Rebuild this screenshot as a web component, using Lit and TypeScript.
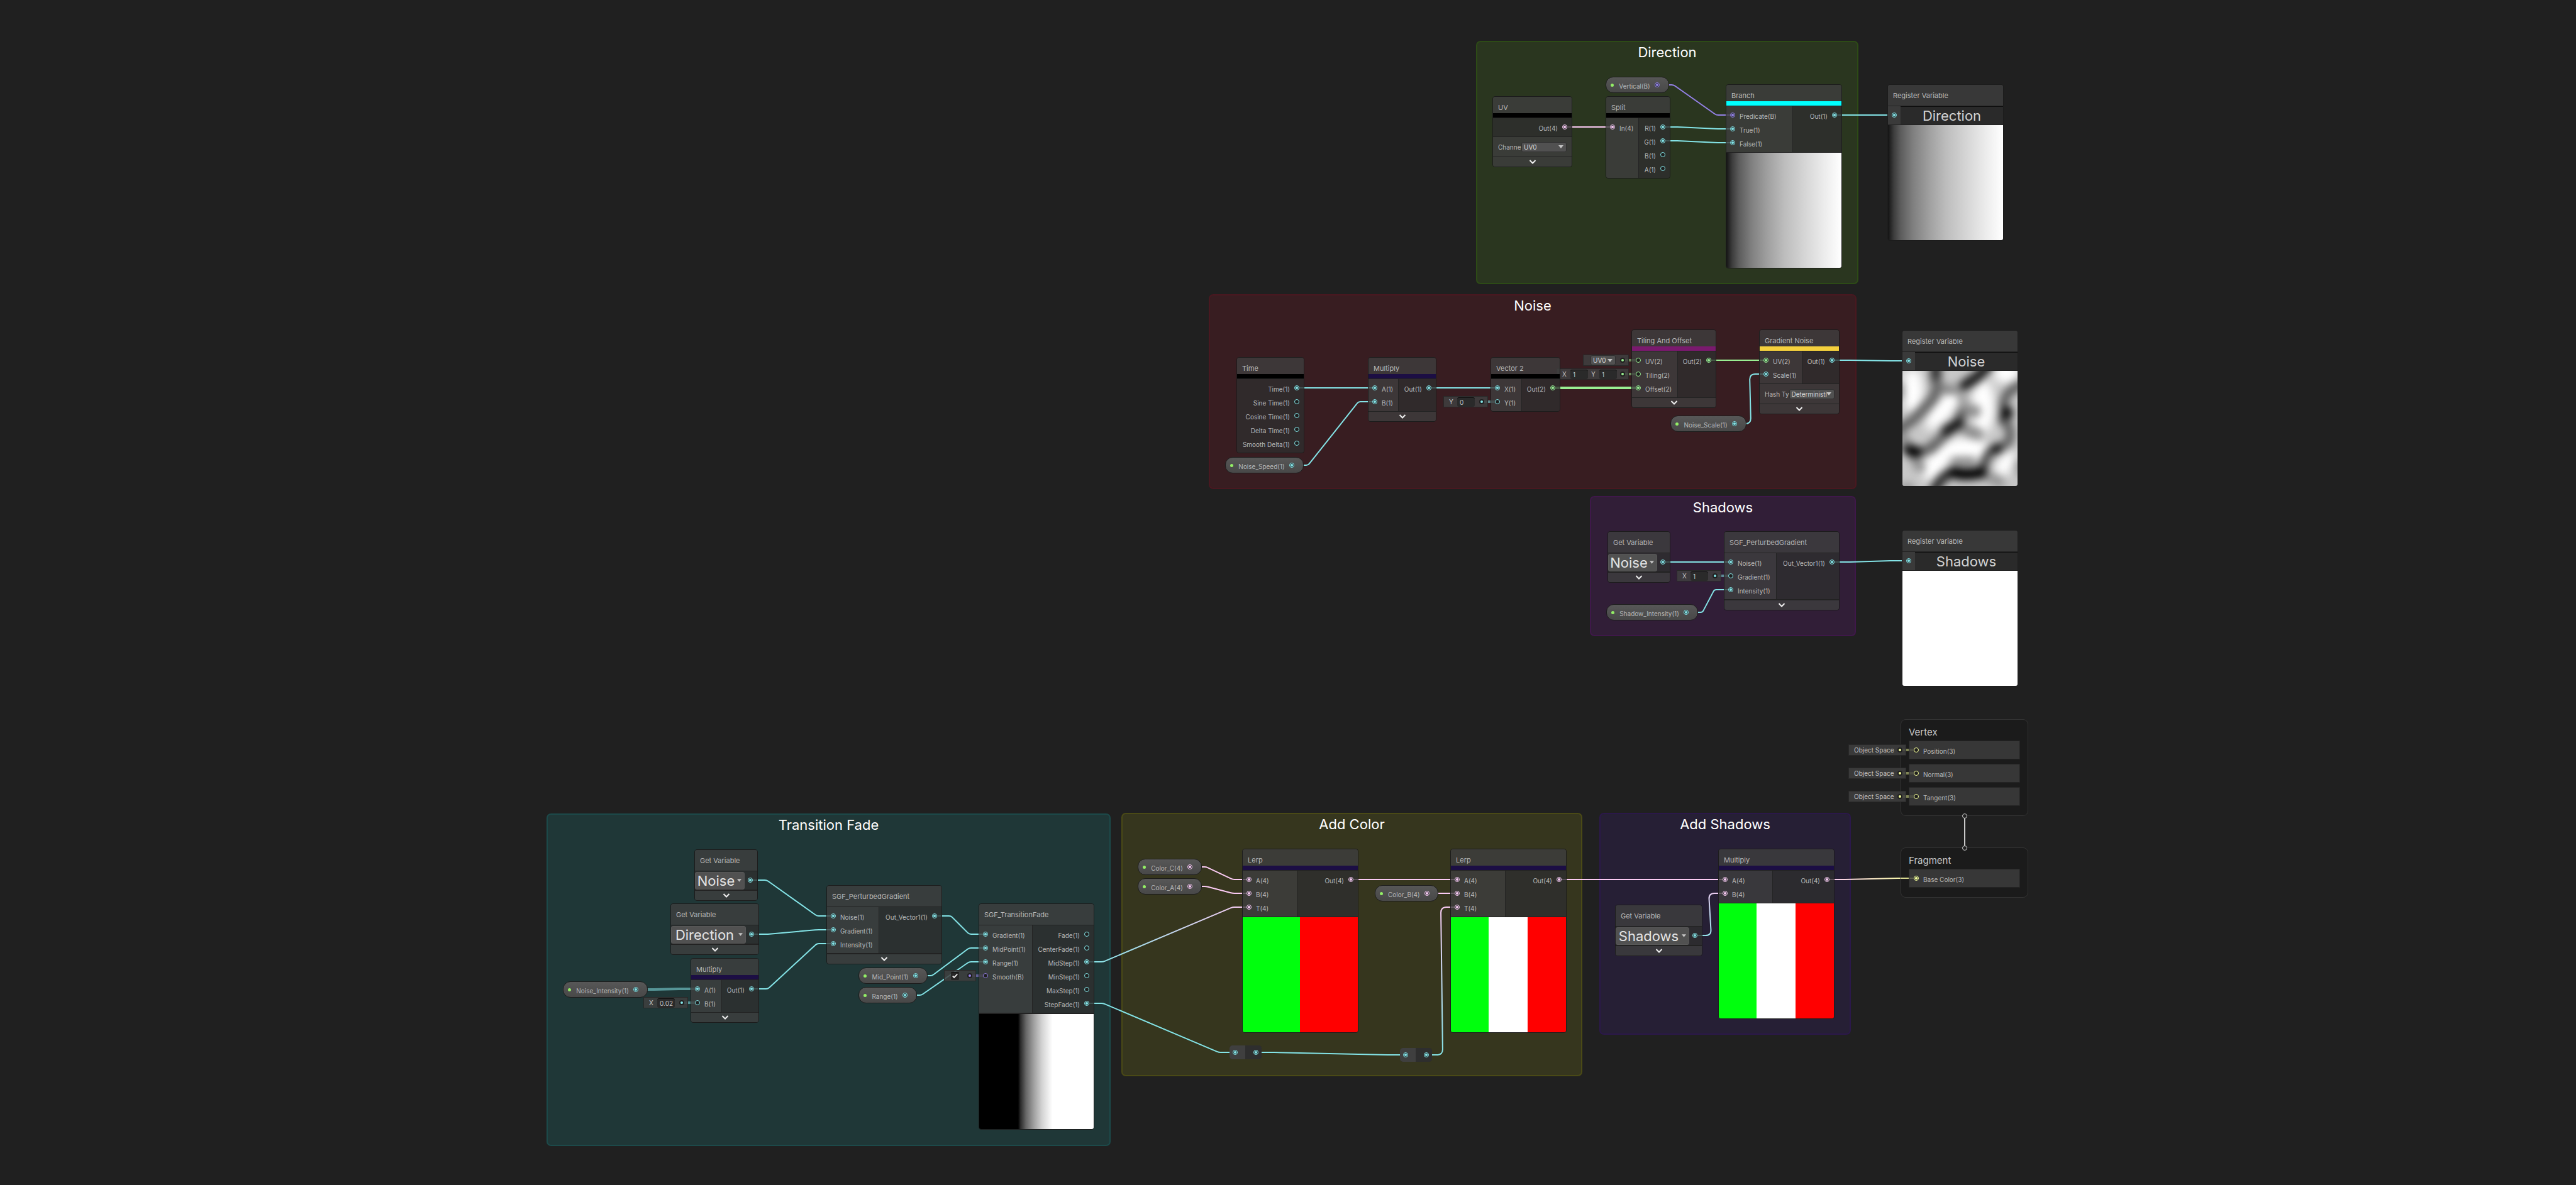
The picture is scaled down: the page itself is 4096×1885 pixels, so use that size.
import { LitElement, html, css, svg, nothing } from "lit";
import { customElement } from "lit/decorators.js";
import { styleMap } from "lit/directives/style-map.js";

/** Zoom of the graph view: graph units are multiplied by this. */
const ZOOM = 0.915;
const px = (n: number) => Math.round(n * ZOOM);

const TYPE_COLORS: Record<string, string> = {
  "1": "#84e4e7",
  "2": "#9aef92",
  "3": "#f6ff9a",
  "4": "#fbcbf4",
  B: "#9481e6",
};

interface Group { title: string; x: number; y: number; w: number; h: number; tone: string; }
interface NodeSpec {
  id: string; x: number; y: number; w: number; title: string;
  stripe?: string;
  /** Width of the input column. */
  inW?: number;
  /** Port names; a trailing * marks a connected port. */
  ins?: string[]; outs?: string[];
  control?: { label: string; value: string };
  collapse?: boolean; thick?: boolean;
  preview?: string;
  variable?: string; register?: string;
}
interface Pill { id: string; x: number; y: number; w: number; name: string; }
interface Slot { node: string; port: number; kind: "fields" | "uv" | "check"; w: number; fields?: [string, string][]; type: string; }
interface Wire { from: string; to: string; type: string; toType?: string; thick?: boolean; dim?: boolean; }

const GROUPS: Group[] = [
  { title: "Direction", x: 2565, y: 71, w: 664, h: 423, tone: "green" },
  { title: "Noise", x: 2101, y: 511, w: 1125, h: 339, tone: "red" },
  { title: "Shadows", x: 2763, y: 862, w: 462, h: 244, tone: "violet" },
  { title: "Transition Fade", x: 950, y: 1414, w: 980, h: 578, tone: "teal" },
  { title: "Add Color", x: 1949, y: 1413, w: 801, h: 458, tone: "olive" },
  { title: "Add Shadows", x: 2779, y: 1413, w: 437, h: 386, tone: "indigo" },
];

const NODES: NodeSpec[] = [
  { id: "uv", x: 2593, y: 167, w: 139, title: "UV", stripe: "#000", outs: ["Out(4)*"], control: { label: "Channe", value: "UV0" }, collapse: true },
  { id: "split", x: 2790, y: 167, w: 113, title: "Split", stripe: "#000", inW: 57, ins: ["In(4)*"], outs: ["R(1)*", "G(1)*", "B(1)", "A(1)"] },
  { id: "branch", x: 2999, y: 146, w: 202, title: "Branch", stripe: "#00ffff", inW: 116, ins: ["Predicate(B)*", "True(1)*", "False(1)*"], outs: ["Out(1)*"], preview: "ramp" },
  { id: "regDir", x: 3280, y: 146, w: 202, title: "Register Variable", register: "Direction", preview: "ramp" },

  { id: "time", x: 2149, y: 621, w: 118, title: "Time", stripe: "#000", outs: ["Time(1)*", "Sine Time(1)", "Cosine Time(1)", "Delta Time(1)", "Smooth Delta(1)"] },
  { id: "mulNoise", x: 2377, y: 621, w: 119, title: "Multiply", stripe: "#1c0e44", inW: 53, ins: ["A(1)*", "B(1)*"], outs: ["Out(1)*"], collapse: true },
  { id: "vec2", x: 2590, y: 621, w: 122, title: "Vector 2", stripe: "#000", inW: 54, ins: ["X(1)*", "Y(1)"], outs: ["Out(2)*"] },
  { id: "tiling", x: 2835, y: 573, w: 147, title: "Tiling And Offset", stripe: "#7a1a6e", inW: 80, ins: ["UV(2)", "Tiling(2)", "Offset(2)*"], outs: ["Out(2)*"], collapse: true },
  { id: "gnoise", x: 3057, y: 573, w: 140, title: "Gradient Noise", stripe: "#f5d03d", inW: 74, ins: ["UV(2)*", "Scale(1)*"], outs: ["Out(1)*"], control: { label: "Hash Ty", value: "Deterministic" }, collapse: true },
  { id: "regNoise", x: 3305, y: 574, w: 202, title: "Register Variable", register: "Noise", preview: "noise" },

  { id: "getNoise1", x: 2793, y: 924, w: 110, title: "Get Variable", variable: "Noise", collapse: true },
  { id: "pert1", x: 2996, y: 924, w: 201, title: "SGF_PerturbedGradient", inW: 91, ins: ["Noise(1)*", "Gradient(1)", "Intensity(1)*"], outs: ["Out_Vector1(1)*"], thick: true, collapse: true },
  { id: "regShadows", x: 3305, y: 921, w: 202, title: "Register Variable", register: "Shadows", preview: "white" },

  { id: "getNoise2", x: 1207, y: 1476, w: 110, title: "Get Variable", variable: "Noise", collapse: true },
  { id: "getDir", x: 1165, y: 1571, w: 154, title: "Get Variable", variable: "Direction", collapse: true },
  { id: "mulInt", x: 1200, y: 1666, w: 119, title: "Multiply", stripe: "#1c0e44", inW: 54, ins: ["A(1)*", "B(1)"], outs: ["Out(1)*"], collapse: true },
  { id: "pert2", x: 1436, y: 1539, w: 201, title: "SGF_PerturbedGradient", inW: 91, ins: ["Noise(1)*", "Gradient(1)*", "Intensity(1)*"], outs: ["Out_Vector1(1)*"], thick: true, collapse: true },
  { id: "fade", x: 1700, y: 1571, w: 202, title: "SGF_TransitionFade", inW: 93, ins: ["Gradient(1)*", "MidPoint(1)*", "Range(1)*", "Smooth(B)"], outs: ["Fade(1)", "CenterFade(1)", "MidStep(1)*", "MinStep(1)", "MaxStep(1)", "StepFade(1)*"], thick: true, preview: "step" },

  { id: "lerp1", x: 2159, y: 1475, w: 202, title: "Lerp", stripe: "#1c0e44", inW: 95, ins: ["A(4)*", "B(4)*", "T(4)*"], outs: ["Out(4)*"], preview: "duo" },
  { id: "lerp2", x: 2520, y: 1475, w: 202, title: "Lerp", stripe: "#1c0e44", inW: 95, ins: ["A(4)*", "B(4)*", "T(4)*"], outs: ["Out(4)*"], preview: "trio" },

  { id: "mulShadow", x: 2986, y: 1475, w: 202, title: "Multiply", stripe: "#1c0e44", inW: 94, ins: ["A(4)*", "B(4)*"], outs: ["Out(4)*"], preview: "trio" },
  { id: "getShadows", x: 2807, y: 1573, w: 151, title: "Get Variable", variable: "Shadows", collapse: true },
];

const PILLS: Pill[] = [
  { id: "pVertical", x: 2790, y: 133, w: 111, name: "Vertical(B)" },
  { id: "pSpeed", x: 2129, y: 794, w: 137, name: "Noise_Speed(1)" },
  { id: "pScale", x: 2903, y: 722, w: 132, name: "Noise_Scale(1)" },
  { id: "pShadow", x: 2791, y: 1050, w: 160, name: "Shadow_Intensity(1)" },
  { id: "pIntensity", x: 978, y: 1706, w: 148, name: "Noise_Intensity(1)" },
  { id: "pMid", x: 1492, y: 1682, w: 120, name: "Mid_Point(1)" },
  { id: "pRange", x: 1492, y: 1716, w: 101, name: "Range(1)" },
  { id: "pColorC", x: 1977, y: 1493, w: 111, name: "Color_C(4)" },
  { id: "pColorA", x: 1977, y: 1527, w: 111, name: "Color_A(4)" },
  { id: "pColorB", x: 2389, y: 1539, w: 110, name: "Color_B(4)" },
];

const REROUTES = [
  { id: "r1", x: 2137, y: 1818 },
  { id: "r2", x: 2433, y: 1822 },
];

const SLOTS: Slot[] = [
  { node: "vec2", port: 1, kind: "fields", w: 78, fields: [["Y", "0"]], type: "1" },
  { node: "tiling", port: 0, kind: "uv", w: 80, type: "2" },
  { node: "tiling", port: 1, kind: "fields", w: 126, fields: [["X", "1"], ["Y", "1"]], type: "2" },
  { node: "pert1", port: 1, kind: "fields", w: 78, fields: [["X", "1"]], type: "1" },
  { node: "mulInt", port: 1, kind: "fields", w: 78, fields: [["X", "0.02"]], type: "1" },
  { node: "fade", port: 3, kind: "check", w: 56, type: "B" },
];

const BLOCKS = [
  { id: "vertex", title: "Vertex", x: 3303, y: 1250, rows: ["Position(3)", "Normal(3)", "Tangent(3)"] },
  { id: "fragment", title: "Fragment", x: 3303, y: 1473, rows: ["Base Color(3)*"] },
];
const BLOCK_W = 222;

const WIRES: Wire[] = [
  { from: "uv:0", to: "split:0", type: "4" },
  { from: "pVertical", to: "branch:0", type: "B" },
  { from: "split:0", to: "branch:1", type: "1" },
  { from: "split:1", to: "branch:2", type: "1" },
  { from: "branch:0", to: "regDir:0", type: "1" },
  { from: "time:0", to: "mulNoise:0", type: "1" },
  { from: "pSpeed", to: "mulNoise:1", type: "1" },
  { from: "mulNoise:0", to: "vec2:0", type: "1" },
  { from: "vec2:0", to: "tiling:2", type: "2", thick: true },
  { from: "tiling:0", to: "gnoise:0", type: "2" },
  { from: "pScale", to: "gnoise:1", type: "1" },
  { from: "gnoise:0", to: "regNoise:0", type: "1" },
  { from: "getNoise1:0", to: "pert1:0", type: "1" },
  { from: "pShadow", to: "pert1:2", type: "1" },
  { from: "pert1:0", to: "regShadows:0", type: "1" },
  { from: "getNoise2:0", to: "pert2:0", type: "1" },
  { from: "getDir:0", to: "pert2:1", type: "1" },
  { from: "pIntensity", to: "mulInt:0", type: "1", thick: true, dim: true },
  { from: "mulInt:0", to: "pert2:2", type: "1" },
  { from: "pert2:0", to: "fade:0", type: "1" },
  { from: "pMid", to: "fade:1", type: "1" },
  { from: "pRange", to: "fade:2", type: "1" },
  { from: "fade:2", to: "lerp1:2", type: "1", toType: "4" },
  { from: "fade:5", to: "r1", type: "1" },
  { from: "r1", to: "r2", type: "1" },
  { from: "r2", to: "lerp2:2", type: "1", toType: "4" },
  { from: "pColorC", to: "lerp1:0", type: "4" },
  { from: "pColorA", to: "lerp1:1", type: "4" },
  { from: "lerp1:0", to: "lerp2:0", type: "4" },
  { from: "pColorB", to: "lerp2:1", type: "4" },
  { from: "lerp2:0", to: "mulShadow:0", type: "4" },
  { from: "getShadows:0", to: "mulShadow:1", type: "1", toType: "4" },
  { from: "mulShadow:0", to: "fragment:0", type: "4", toType: "3" },
];

const typeOf = (name: string) => name.match(/\((.)\)/)![1];
const labelOf = (name: string) => name.replace("*", "");

/** Screen position of the centre of a port, on its output or input side. */
function anchor(ref: string, side: "out" | "in"): [number, number] {
  const [id, index = "0"] = ref.split(":");
  const i = Number(index);
  const node = NODES.find((n) => n.id === id);
  if (node) {
    const y = px(node.y) + 49 + 22 * i;
    return side === "out" ? [px(node.x + node.w) - 12, y] : [px(node.x) + 11, y];
  }
  const pill = PILLS.find((p) => p.id === id);
  if (pill) return [px(pill.x + pill.w) - 19, px(pill.y) + 13];
  const block = BLOCKS.find((b) => b.id === id);
  if (block) return [px(block.x) + 25, px(block.y) + 49 + 37 * i];
  const r = REROUTES.find((q) => q.id === id)!;
  return [px(r.x) + (side === "out" ? 42 : 9), px(r.y) + 11];
}

/** Horizontal stub, straight run, horizontal stub, with the two bends rounded. */
function wirePath([x1, y1]: [number, number], [x2, y2]: [number, number]): string {
  if (y1 === y2) return `M${x1} ${y1}H${x2}`;
  const ax = x1 + 26;
  const bx = x2 - 26;
  const dx = bx - ax;
  const dy = y2 - y1;
  const len = Math.hypot(dx, dy);
  const r = Math.min(Math.abs(dx) < 12 ? 9 : 3, len / 2);
  const ux = (dx / len) * r;
  const uy = (dy / len) * r;
  return `M${x1} ${y1}L${ax - r} ${y1}Q${ax} ${y1} ${ax + ux} ${y1 + uy}L${bx - ux} ${y2 - uy}Q${bx} ${y2} ${bx + r} ${y2}L${x2} ${y2}`;
}

@customElement("app-root")
export class AppRoot extends LitElement {
  static styles = css`
    :host {
      display: block;
      position: relative;
      box-sizing: border-box;
      width: 100%;
      min-height: 100vh;
      overflow: hidden;
      background: #202020;
      color: #b9b9b9;
      font-family: Inter, "Liberation Sans", sans-serif;
      font-size: 10px;
      line-height: 14px;
    }
    *, *::before { box-sizing: border-box; }
    h1, h2, h3 { margin: 0; font-weight: 400; }
    button, input, select { font: inherit; color: inherit; margin: 0; padding: 0; border: 0; min-width: 0; }

    .group, .node, .pill, .reroute, .slot, .block, .wires { position: absolute; }
    .wires { inset: 0; width: 100%; height: 100%; fill: none; }

    .group { border: 2px solid; border-radius: 7px; padding-top: 3px; text-align: center; }
    .group h1 { font-size: 22px; line-height: 26px; color: #fff; }
    .green { background: #2a361f; border-color: #2d4b16; }
    .red { background: #381d21; border-color: #491820; }
    .violet { background: #311e37; border-color: #3f184a; }
    .teal { background: #1f3737; border-color: #1c4a4a; }
    .olive { background: #36361e; border-color: #4a4a16; }
    .indigo { background: #261f35; border-color: #2b184a; }

    .node { border: 1px solid #1c1c1c; border-radius: 4px; overflow: hidden; display: flex; flex-direction: column; }
    .head { height: 33px; padding: 10px 0 0 8px; background: rgba(63, 63, 63, 0.8); white-space: nowrap; }
    .striped { height: 26px; }
    .stripe { height: 7px; }
    .head h2 { font-size: 11px; line-height: 15px; }
    .rule { height: 1px; background: #222; }
    .rule.thick { height: 2px; }
    .body { display: grid; }
    .ins { padding: 3px 0 4px 6px; background: rgba(63, 63, 63, 0.8); }
    .outs { padding: 3px 7px 4px 0; background: rgba(46, 46, 46, 0.8); }
    .ins + .outs { border-left: 1px solid #242424; }
    .port { display: flex; align-items: center; gap: 7px; height: 22px; white-space: nowrap; }
    .outs .port { justify-content: flex-end; }
    .port span, .pill span, .row span { padding-top: 4px; }
    .dot { display: block; flex: none; width: 8px; height: 8px; fill: none; }

    .control { display: flex; align-items: center; justify-content: space-between; height: 31px; padding: 0 8px; background: rgba(63, 63, 63, 0.8); }
    .control label { white-space: nowrap; }
    .control .pick { flex: none; width: 72px; }
    .pick { display: grid; align-items: center; min-width: 0; }
    .pick > * { grid-area: 1 / 1; min-width: 0; }
    .pick svg { justify-self: end; margin-right: 5px; pointer-events: none; fill: #c4c4c4; }
    .pick select {
      appearance: none; width: 100%; height: 16px; padding: 0 11px 0 3px; border: 1px solid #303030;
      border-radius: 3px; background: #515151; color: #dcdcdc; line-height: 14px; outline: none;
    }
    .collapse {
      display: grid; place-items: center; width: 100%; height: 15px;
      background: rgba(63, 63, 63, 0.8);
    }
    .collapse svg { fill: none; stroke: #eee; stroke-width: 2; }

    .var { grid-template-columns: 1fr 20px; height: 29px; background: rgba(46, 46, 46, 0.8); }
    .var .pick select {
      height: 28px; padding: 0 12px 0 0; border-color: #585858; text-align: center; text-align-last: center;
      font-size: 22px; line-height: 26px; color: #e4e4e4;
    }
    .var .pick svg { width: 7px; }
    .var .outs { padding-left: 0; background: none; }
    .reg { grid-template-columns: 20px 1fr; height: 29px; background: #2a2a2a; }
    .reg input { width: 100%; border-top: 1px solid #0d0d0d; background: #2a2a2a; text-align: center; font-size: 22px; color: #d2d2d2; outline: none; }

    .preview { height: 183px; width: 100%; display: block; }
    .ramp { background: linear-gradient(90deg, #141414 0%, #3c3c3c 5%, #5c5c5c 11%, #808080 22%, #a0a0a0 36%, #bcbcbc 50%, #d8d8d8 70%, #ececec 85%, #ffffff 100%); }
    .white { background: #fff; }
    .step { background: linear-gradient(90deg, #000 34%, #2a2a2a 36%, #686868 41%, #a2a2a2 48%, #d4d4d4 55%, #fff 64%); }
    .duo { background: linear-gradient(90deg, #00ff0d 50%, #ff0000 50%); }
    .trio { background: linear-gradient(90deg, #00ff0d 33%, #fff 33%, #fff 66.5%, #ff0000 66.5%); }

    .pill {
      display: flex; align-items: center; gap: 7px; height: 26px; padding: 0 14px 0 6px;
      border: 1px solid #1c1c1c; border-radius: 12px; white-space: nowrap;
      background: linear-gradient(#575757, #484848);
    }
    .pill i { flex: none; width: 5px; height: 5px; margin: 0 1px; border-radius: 50%; background: #93ee66; }
    .pill span { flex: 1; text-align: center; }

    .reroute { display: grid; grid-template-columns: 25px 26px; height: 22px; border-radius: 5px; overflow: hidden; background: #2e2e2e; align-items: center; }
    .reroute div { display: grid; align-items: center; height: 100%; padding-left: 5px; background: #3f3f3f; }
    .reroute div + div { padding-left: 13px; background: #2e2e2e; }

    .slot {
      display: flex; align-items: center; height: 18px; padding: 0 5px 0 8px;
      border: 1px solid #282828; background: rgba(63, 63, 63, 0.85); color: #c4c4c4; white-space: nowrap;
    }
    .slot .dot { margin-left: auto; }
    .slot label { width: 13px; }
    .slot input[type="text"] { width: 28px; height: 15px; margin-right: 5px; padding-left: 4px; border-top: 1px solid #0d0d0d; border-radius: 3px; background: #2a2a2a; outline: none; }
    .slot .pick { width: 40px; margin-left: 3px; }
    .slot input[type="checkbox"] { appearance: none; width: 13px; height: 13px; border-radius: 2px; background: #262626; border-top: 1px solid #0d0d0d; }
    .tick { display: grid; margin-left: 2px; }
    .tick > * { grid-area: 1 / 1; }
    .tick svg { fill: none; stroke: #eee; stroke-width: 2; pointer-events: none; }

    .block { padding: 12px 12px 15px; border: 1px solid #333; border-radius: 8px; background: rgba(0, 0, 0, 0.13); }
    .block h3 { height: 21px; font-size: 15px; line-height: 15px; color: #c8c8c8; }
    .rows { display: grid; gap: 7px; }
    .row { display: flex; align-items: center; gap: 7px; height: 30px; padding-left: 7px; border: 1px solid #242424; background: rgba(63, 63, 63, 0.8); }
  `;

  private dot(type: string, on: boolean) {
    const c = TYPE_COLORS[type];
    return html`<svg class="dot" viewBox="0 0 8 8" aria-hidden="true">
      <circle cx="4" cy="4" r="3.5" stroke=${c} fill=${on ? "#2a3334" : "#1e1e1e"}></circle>
      ${on ? svg`<circle cx="4" cy="4" r="2.1" fill=${c}></circle>` : nothing}
    </svg>`;
  }

  private port(name: string, out: boolean) {
    const dot = this.dot(typeOf(name), name.endsWith("*"));
    const label = html`<span>${labelOf(name)}</span>`;
    return html`<div class="port">${out ? html`${label}${dot}` : html`${dot}${label}`}</div>`;
  }

  private pick(id: string, value: string, label?: string) {
    return html`<div class="pick">
      <select id=${id} aria-label=${label ?? nothing}><option>${value}</option></select>
      <svg width="8" height="5" viewBox="0 0 8 5" aria-hidden="true"><path d="M0 0H8L4 5Z"></path></svg>
    </div>`;
  }

  private body(n: NodeSpec) {
    if (n.variable) {
      return html`<div class="body var">
        ${this.pick(`${n.id}-name`, n.variable, "Variable")}
        <div class="outs"><div class="port">${this.dot("1", true)}</div></div>
      </div>`;
    }
    if (n.register) {
      return html`<div class="body reg">
        <div class="ins"><div class="port">${this.dot("1", true)}</div></div>
        <input type="text" aria-label="Variable name" .value=${n.register} />
      </div>`;
    }
    const columns = n.ins ? `${px(n.inW!) - 1}px 1fr` : "1fr";
    return html`<div class="body" style=${styleMap({ gridTemplateColumns: columns })}>
      ${n.ins ? html`<div class="ins">${n.ins.map((p) => this.port(p, false))}</div>` : nothing}
      <div class="outs">${n.outs!.map((p) => this.port(p, true))}</div>
    </div>`;
  }

  private preview(kind: string) {
    if (kind !== "noise") return html`<div class="preview ${kind}"></div>`;
    return html`<svg class="preview" viewBox="0 0 200 200" preserveAspectRatio="none" role="img" aria-label="Noise preview">
      <defs>
        <filter id="soft" x="-20%" y="-20%" width="140%" height="140%" color-interpolation-filters="sRGB"><feGaussianBlur stdDeviation="7"></feGaussianBlur></filter>
        <filter id="softer" x="-20%" y="-20%" width="140%" height="140%" color-interpolation-filters="sRGB"><feGaussianBlur stdDeviation="9"></feGaussianBlur></filter>
      </defs>
      <rect width="200" height="200" fill="#c8c8c8"></rect>
      <g filter="url(#softer)" fill="#fff">
        <ellipse cx="18" cy="34" rx="18" ry="38"></ellipse>
        <ellipse cx="70" cy="68" rx="17" ry="42" transform="rotate(40 70 68)"></ellipse>
        <ellipse cx="140" cy="62" rx="20" ry="46"></ellipse>
        <ellipse cx="180" cy="2" rx="22" ry="20"></ellipse>
        <ellipse cx="108" cy="138" rx="44" ry="22"></ellipse>
        <ellipse cx="58" cy="162" rx="18" ry="32" transform="rotate(35 58 162)"></ellipse>
        <ellipse cx="178" cy="162" rx="14" ry="26" transform="rotate(30 178 162)"></ellipse>
      </g>
      <g filter="url(#soft)" fill="none" stroke-linecap="round" stroke-linejoin="round">
        <path stroke="#848484" stroke-width="16" d="M60 26Q80 36 98 30"></path>
        <path stroke="#a0a0a0" stroke-width="15" d="M98 32Q112 56 104 76"></path>
        <path stroke="#909090" stroke-width="22" d="M112 70H126"></path>
        <path stroke="#8a8a8a" stroke-width="17" d="M98 94L118 106L132 110"></path>
        <path stroke="#8e8e8e" stroke-width="17" d="M-8 132L14 138L30 168M-4 104L12 136"></path>
        <path stroke="#959595" stroke-width="18" d="M92 158H120M146 182L170 194M206 162V174M4 204H12M-6 28V42"></path>
        <path stroke="#2c2c2c" stroke-width="19" d="M58 -14V16"></path>
        <path stroke="#686868" stroke-width="18" d="M59 22Q60 30 56 42"></path>
        <path stroke="#161616" stroke-width="18" d="M108 25L118 18Q136 8 150 -12"></path>
        <path stroke="#606060" stroke-width="17" d="M56 44Q42 62 22 82Q10 94 -8 100"></path>
        <path stroke="#606060" stroke-width="17" d="M102 74L98 92L78 106Q62 122 50 134"></path>
        <path stroke="#101010" stroke-width="17" d="M98 90L76 104"></path>
        <path stroke="#606060" stroke-width="17" d="M52 130Q40 142 24 140"></path>
        <path stroke="#000" stroke-width="20" d="M13 138L24 141"></path>
        <path stroke="#5c5c5c" stroke-width="16" d="M210 22L186 36Q172 52 178 76"></path>
        <path stroke="#000" stroke-width="20" d="M182 72L178 86"></path>
        <path stroke="#606060" stroke-width="16" d="M180 88Q192 110 184 124L164 136"></path>
        <path stroke="#000" stroke-width="17" d="M164 135L153 141"></path>
        <path stroke="#484848" stroke-width="16" d="M152 142Q142 156 140 172"></path>
        <path stroke="#282828" stroke-width="17" d="M88 176Q68 182 54 210"></path>
        <path stroke="#000" stroke-width="20" d="M90 177Q110 183 136 177"></path>
      </g>
    </svg>`;
  }

  private node(n: NodeSpec) {
    const box = { left: `${px(n.x)}px`, top: `${px(n.y)}px`, width: `${px(n.x + n.w) - px(n.x)}px` };
    const thick = n.thick || n.variable ? "rule thick" : "rule";
    return html`<section class="node" style=${styleMap(box)}>
      <header class="head ${n.stripe ? "striped" : ""}"><h2>${n.title}</h2></header>
      ${n.stripe ? html`<div class="stripe" style=${styleMap({ background: n.stripe })}></div>` : nothing}
      <div class="rule"></div>
      ${this.body(n)}
      ${n.control
        ? html`<div class="rule"></div>
            <div class="control">
              <label for="${n.id}-control">${n.control.label}</label>
              ${this.pick(`${n.id}-control`, n.control.value)}
            </div>`
        : nothing}
      ${n.collapse
        ? html`<div class=${thick}></div>
            <button class="collapse" type="button" aria-label="Collapse ${n.title}">
              <svg width="12" height="7" viewBox="0 0 12 7" aria-hidden="true"><path d="M1.5 1L6 5.5L10.5 1"></path></svg>
            </button>`
        : nothing}
      ${n.preview ? html`<div class=${thick}></div>${this.preview(n.preview)}` : nothing}
    </section>`;
  }

  private slotDot(type: string) {
    return html`<svg class="dot" viewBox="0 0 8 8" aria-hidden="true">
      <circle cx="4" cy="4" r="4" fill="#1e1e1e"></circle>
      <circle cx="4" cy="4" r="2" fill=${TYPE_COLORS[type]}></circle>
    </svg>`;
  }

  private slotBox(s: Slot) {
    const [x, y] = anchor(`${s.node}:${s.port}`, "in");
    const w = px(s.w);
    const box = { left: `${x - 15 - w}px`, top: `${y - 9}px`, width: `${w}px` };
    const id = `${s.node}-${s.port}`;
    return html`<div class="slot" style=${styleMap(box)}>
      ${s.kind === "uv" ? this.pick(id, "UV0", "UV channel") : nothing}
      ${s.kind === "check"
        ? html`<div class="tick">
            <input type="checkbox" checked aria-label="Smooth" />
            <svg width="13" height="13" viewBox="0 0 14 14" aria-hidden="true"><path d="M3 7L5.5 9.5L11 4"></path></svg>
          </div>`
        : nothing}
      ${(s.fields ?? []).map(
        ([label, value]) => html`<label for="${id}-${label}">${label}</label><input id="${id}-${label}" type="text" .value=${value} />`,
      )}
      ${this.slotDot(s.type)}
    </div>`;
  }

  private wire(w: Wire, i: number) {
    const a = anchor(w.from, "out");
    const b = anchor(w.to, "in");
    const stroke = w.toType ? `url(#blend${i})` : TYPE_COLORS[w.type];
    return svg`
      ${w.toType
        ? svg`<linearGradient id="blend${i}" gradientUnits="userSpaceOnUse" x1=${a[0]} y1=${a[1]} x2=${b[0]} y2=${b[1]}>
            <stop offset="0" stop-color=${TYPE_COLORS[w.type]}></stop>
            <stop offset="1" stop-color=${TYPE_COLORS[w.toType]}></stop>
          </linearGradient>`
        : nothing}
      <path d=${wirePath(a, b)} stroke=${stroke} stroke-width=${w.thick ? 4 : 2} opacity=${w.dim ? 0.55 : 1}></path>`;
  }

  private stub([x, y]: [number, number], type: string) {
    return svg`<path d="M${x - 25} ${y}H${x}" stroke=${TYPE_COLORS[type]} stroke-width="4" opacity="0.55"></path>`;
  }

  render() {
    const vertex = BLOCKS[0];
    const linkX = px(vertex.x + BLOCK_W / 2);
    return html`
      ${GROUPS.map(
        (g) => html`<div class="group ${g.tone}" style=${styleMap({
          left: `${px(g.x)}px`, top: `${px(g.y)}px`,
          width: `${px(g.x + g.w) - px(g.x)}px`, height: `${px(g.y + g.h) - px(g.y)}px`,
        })}><h1>${g.title}</h1></div>`,
      )}
      <svg class="wires" aria-hidden="true">
        ${WIRES.map((w, i) => this.wire(w, i))}
        ${SLOTS.map((s) => this.stub(anchor(`${s.node}:${s.port}`, "in"), s.type))}
        ${vertex.rows.map((_, i) => this.stub(anchor(`vertex:${i}`, "in"), "3"))}
      </svg>
      ${SLOTS.map((s) => this.slotBox(s))}
      ${NODES.map((n) => this.node(n))}
      ${PILLS.map(
        (p) => html`<div class="pill" style=${styleMap({
          left: `${px(p.x)}px`, top: `${px(p.y)}px`, width: `${px(p.x + p.w) - px(p.x)}px`,
        })}><i></i><span>${p.name}</span>${this.dot(typeOf(p.name), true)}</div>`,
      )}
      ${REROUTES.map(
        (r) => html`<div class="reroute" style=${styleMap({ left: `${px(r.x)}px`, top: `${px(r.y)}px` })}>
          <div>${this.dot("1", true)}</div><div>${this.dot("1", true)}</div>
        </div>`,
      )}
      ${BLOCKS.map(
        (b) => html`<section class="block" style=${styleMap({
          left: `${px(b.x)}px`, top: `${px(b.y)}px`, width: `${px(BLOCK_W)}px`,
        })}>
          <h3>${b.title}</h3>
          <div class="rows">
            ${b.rows.map((name) => html`<div class="row">${this.dot("3", name.endsWith("*"))}<span>${labelOf(name)}</span></div>`)}
          </div>
        </section>`,
      )}
      ${vertex.rows.map((_, i) => {
        const [x, y] = anchor(`vertex:${i}`, "in");
        return html`<div class="slot" style=${styleMap({ left: `${x - 108}px`, top: `${y - 9}px`, width: "92px" })}>
          Object Space${this.slotDot("3")}
        </div>`;
      })}
      <svg class="wires" aria-hidden="true">
        <path d="M${linkX} ${px(1423)}V${px(1470)}" stroke="#c8c8c8" stroke-width="2"></path>
        <circle cx=${linkX} cy=${px(1419)} r="3.5" fill="#202020" stroke="#c8c8c8"></circle>
        <circle cx=${linkX} cy=${px(1474)} r="3.5" fill="#202020" stroke="#c8c8c8"></circle>
      </svg>
    `;
  }
}
